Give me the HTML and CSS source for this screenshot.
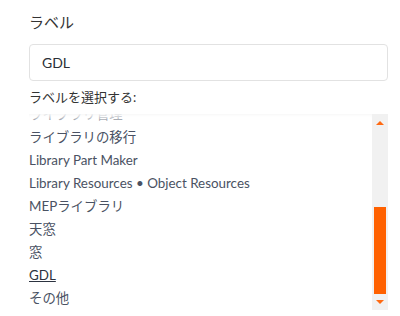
FILE: index.html
```html
<!DOCTYPE html>
<html lang="ja">
<head>
    <meta charset="UTF-8">
    <meta name="viewport" content="width=device-width, initial-scale=1.0">
    <title>ラベル</title>
    <link rel="stylesheet" href="styles.css">
</head>
<body>
    <div class="field">
        <div class="field-title">ラベル</div>
        <input class="label-input" type="text" value="GDL">
        <div class="choose-title">ラベルを選択する:</div>

        <!-- Label list, scrolled to the bottom -->
        <div class="picker">
            <div class="list">
                <div class="item">ライブラリ管理</div>
                <div class="item">ライブラリの移行</div>
                <div class="item">Library Part Maker</div>
                <div class="item">Library Resources • Object Resources</div>
                <div class="item">MEPライブラリ</div>
                <div class="item">天窓</div>
                <div class="item">窓</div>
                <div class="item selected">GDL</div>
                <div class="item">その他</div>
            </div>
            <div class="scrollbar">
                <div class="sb-btn"><span class="arrow-up"></span></div>
                <div class="sb-track"><div class="sb-thumb"></div></div>
                <div class="sb-btn down"><span class="arrow-down"></span></div>
            </div>
            <div class="fade"></div>
        </div>
    </div>
</body>
</html>
```

FILE: styles.css
```css
body {
    margin: 0;
    padding: 0;
    background-color: #ffffff;
    font-family: 'Lato', 'Noto Sans CJK JP', sans-serif;
    color: #333333;
}

.field {
    padding: 10px 12px 0 29px;
}

.field-title {
    font-size: 15px;
    line-height: 24px;
    color: #333333;
}

.label-input {
    display: block;
    box-sizing: border-box;
    width: 100%;
    height: 37px;
    margin-top: 10px;
    padding: 0 12px;
    border: 1px solid #e2e2e2;
    border-radius: 4px;
    font-family: 'Lato', 'Noto Sans CJK JP', sans-serif;
    font-size: 14px;
    color: #2b2f36;
    outline: none;
}

.choose-title {
    margin-top: 6px;
    font-size: 13px;
    line-height: 20px;
    color: #333333;
}

.picker {
    position: relative;
    display: flex;
    height: 196px;
    margin-top: 7px;
}

.list {
    flex: 1;
    display: flex;
    flex-direction: column;
    justify-content: flex-end;
    overflow: hidden;
}

.item {
    flex-shrink: 0;
    font-size: 13.4px;
    line-height: 23px;
    color: #4a5263;
    white-space: nowrap;
}

.item.selected {
    color: #2c3340;
    text-decoration: underline;
}

.fade {
    position: absolute;
    top: 0;
    left: 0;
    right: 16px;
    height: 12px;
    background: linear-gradient(to bottom, rgba(255, 255, 255, 0.95), rgba(255, 255, 255, 0));
    box-shadow: inset 0 3px 4px -3px rgba(0, 0, 0, 0.06);
}

.scrollbar {
    width: 16px;
    display: flex;
    flex-direction: column;
    background-color: #f1f1f1;
}

.sb-btn {
    height: 18px;
    display: flex;
    align-items: center;
    justify-content: center;
}

.sb-btn.down {
    height: 16px;
}

.arrow-up {
    width: 0;
    height: 0;
    border-left: 4px solid transparent;
    border-right: 4px solid transparent;
    border-bottom: 4px solid #ff6a13;
}

.arrow-down {
    width: 0;
    height: 0;
    border-left: 4px solid transparent;
    border-right: 4px solid transparent;
    border-top: 4px solid #ff6a13;
}

.sb-track {
    flex: 1;
    display: flex;
    flex-direction: column;
    justify-content: flex-end;
    padding: 0 2px;
}

.sb-thumb {
    height: 87px;
    background-color: #ff6100;
}
```
